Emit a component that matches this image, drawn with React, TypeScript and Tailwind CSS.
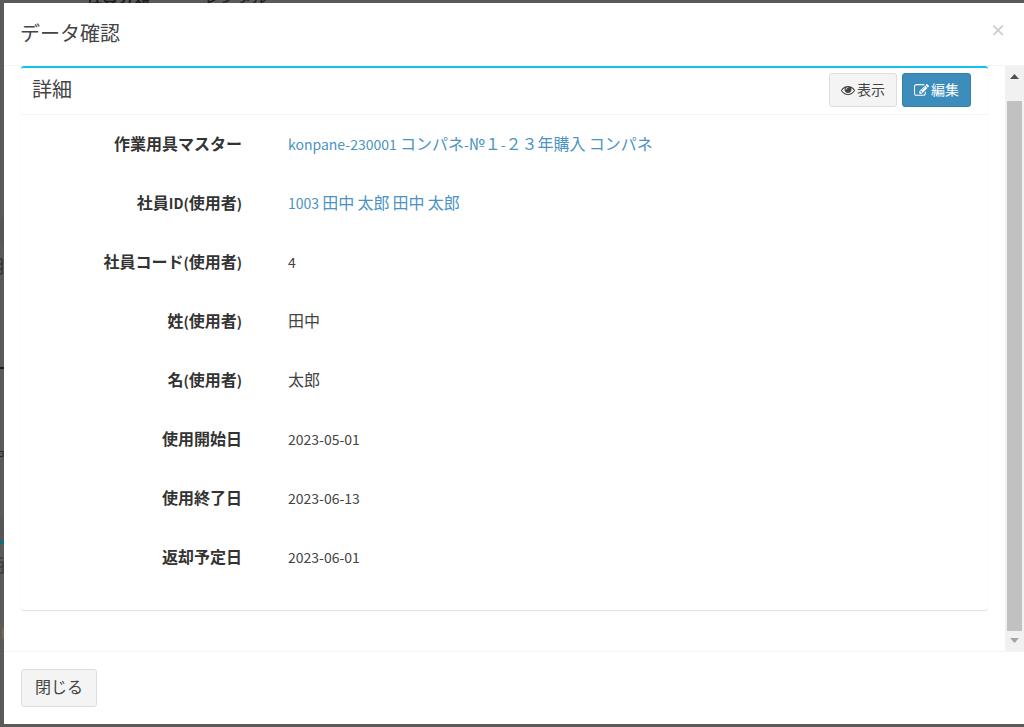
import type { ReactNode } from 'react';

function EyeIcon() {
  return (
    <svg viewBox="0 0 1792 1792" fill="currentColor" aria-hidden="true" className="size-[14px]">
      <path d="M1664 960q-152-236-381-353 61 104 61 225 0 185-131.5 316.5t-316.5 131.5-316.5-131.5-131.5-316.5q0-121 61-225-229 117-381 353 133 205 333.5 326.5t434.5 121.5 434.5-121.5 333.5-326.5zm-720-384q0-20-14-34t-34-14q-125 0-214.5 89.5t-89.5 214.5q0 20 14 34t34 14 34-14 14-34q0-86 61-147t147-61q20 0 34-14t14-34zm848 384q0 34-20 69-140 230-376.5 368.5t-499.5 138.5-499.5-139-376.5-368q-20-35-20-69t20-69q140-229 376.5-368t499.5-139 499.5 139 376.5 368q20 35 20 69z" />
    </svg>
  );
}

function EditIcon() {
  return (
    <svg viewBox="0 0 1792 1792" fill="currentColor" aria-hidden="true" className="size-[15px]">
      <path d="M888 1184l116-116-152-152-116 116v56h96v96h56zm440-720q-16-16-33 1l-350 350q-17 17-1 33t33-1l350-350q17-17 1-33zm80 594v190q0 119-84.5 203.5t-203.5 84.5h-832q-119 0-203.5-84.5t-84.5-203.5v-832q0-119 84.5-203.5t203.5-84.5h832q63 0 117 25 15 7 18 23 3 17-9 29l-49 49q-14 14-32 8-23-6-45-6h-832q-66 0-113 47t-47 113v832q0 66 47 113t113 47h832q66 0 113-47t47-113v-126q0-13 9-22l64-64q15-15 35-7t20 29zm-96-738l288 288-672 672h-288v-288zm444 132l-92 92-288-288 92-92q28-28 68-28t68 28l152 152q28 28 28 68t-28 68z" />
    </svg>
  );
}

// latin parts of a mixed line are set a step smaller than the kanji
function Latin({ children }: { children: ReactNode }) {
  return <span className="text-sm">{children}</span>;
}

const rows = [
  {
    label: '作業用具マスター',
    value: (
      <a href="#tool" className="text-[#4a93c4]">
        <Latin>konpane-230001 </Latin>コンパネ<Latin>-</Latin>№１<Latin>-</Latin>２３年購入<Latin> </Latin>コンパネ
      </a>
    ),
  },
  {
    label: <>社員<Latin>ID(</Latin>使用者<Latin>)</Latin></>,
    value: (
      <a href="#employee" className="text-[#4a93c4]">
        <Latin>1003 </Latin>田中<Latin> </Latin>太郎<Latin> </Latin>田中<Latin> </Latin>太郎
      </a>
    ),
  },
  { label: <>社員コード<Latin>(</Latin>使用者<Latin>)</Latin></>, value: <Latin>4</Latin> },
  { label: <>姓<Latin>(</Latin>使用者<Latin>)</Latin></>, value: '田中' },
  { label: <>名<Latin>(</Latin>使用者<Latin>)</Latin></>, value: '太郎' },
  { label: '使用開始日', value: <Latin>2023-05-01</Latin> },
  { label: '使用終了日', value: <Latin>2023-06-13</Latin> },
  { label: '返却予定日', value: <Latin>2023-06-01</Latin> },
];

function DetailBox() {
  return (
    <section className="rounded-[3px] border-t-2 border-t-[#14c1ee] bg-white shadow-[0_1px_1px_rgba(0,0,0,0.12)]">
      <div className="flex h-[47px] items-start justify-between border-b border-[#f4f4f4] pt-[5px] pl-[11px] pr-[17px]">
        <h3 className="text-xl leading-8">詳細</h3>
        <div className="flex gap-[5px]">
          <button type="button" className="flex h-[34px] items-center gap-[2px] rounded-[3px] border border-[#ddd] bg-[#f4f4f4] px-[11px] text-sm text-[#444]">
            <EyeIcon />
            <span className="pb-[3px]">表示</span>
          </button>
          <button type="button" className="flex h-[34px] items-center gap-[2px] rounded-[3px] border border-[#367fa9] bg-[#3c8dbc] px-[11px] text-sm text-white">
            <EditIcon />
            <span className="pb-[3px]">編集</span>
          </button>
        </div>
      </div>

      <dl className="pt-4 pr-3 pb-[7px] pl-[14px]">
        {rows.map((row, i) => (
          <div key={i} className="flex h-[59px] gap-[46px] text-base leading-6">
            <dt className="w-[22%] text-right font-bold text-[#333]">{row.label}</dt>
            <dd className="flex-1 whitespace-pre">{row.value}</dd>
          </div>
        ))}
      </dl>
    </section>
  );
}

function ScrollBar() {
  return (
    <div aria-hidden="true" className="flex w-[19px] flex-col items-center bg-[#f1f1f1]">
      <svg viewBox="0 0 19 35" className="h-[35px] w-full">
        <path d="M5 13h9l-4.5-5z" fill="#505050" />
      </svg>
      <div className="w-[15px] flex-1 bg-[#c1c1c1]" />
      <svg viewBox="0 0 19 20" className="h-5 w-full">
        <path d="M5 7h9l-4.5 5z" fill="#a3a3a3" />
      </svg>
    </div>
  );
}

// dimmed page that shows around the edge of the dialog
function Backdrop() {
  return (
    <div aria-hidden="true" className="absolute inset-0 overflow-hidden">
      <svg viewBox="0 0 4 727" className="absolute top-0 left-0 h-[727px] w-1">
        <path d="M0 219h4v24H0zM0 519h4v22H0z" fill="#545557" />
        <path d="M0 259h2v15H0M0 264h2M0 269h2" fill="none" stroke="#222" />
        <path d="M0 367h4v2H0z" fill="#1c1c1c" />
        <path d="M0 451.5h3v5H0" fill="none" stroke="#262626" />
        <path d="M0 541h4v3H0z" fill="#0b6f84" />
        <path d="M0 558h3M0 562h3v11H0M0 567h3" fill="none" stroke="#2b3036" />
        <path d="M2 628h2v11H2z" fill="#75694f" />
      </svg>
      <div className="absolute -top-3 left-[86px] flex gap-[54px] text-base leading-4 text-[#1c1c1c]">
        <span className="font-bold">社員分類</span>
        <span>レンタル</span>
      </div>
    </div>
  );
}

export default function App() {
  return (
    <div className="relative flex min-h-screen flex-col bg-[#5c5a59] pt-[3px] pb-[3px] pl-1 font-['Noto_Sans_CJK_JP',sans-serif] text-[#444]">
      <Backdrop />
      <div role="dialog" aria-labelledby="dialog-title" className="relative flex flex-1 flex-col bg-white">
        <header className="flex h-[63px] items-start justify-between border-b border-[#f4f4f4] pt-[14px] pl-4 pr-[18px]">
          <h2 id="dialog-title" className="text-xl leading-8">データ確認</h2>
          <button type="button" aria-label="閉じる" className="text-base leading-6 font-bold text-[#ccc]">×</button>
        </header>

        <div className="flex flex-1 border-b border-[#f4f4f4]">
          <div className="flex-1 pl-[17px] pr-[17px]">
            <DetailBox />
          </div>
          <ScrollBar />
        </div>

        <footer className="px-[17px] py-[17px]">
          <button type="button" className="h-[38px] rounded-[3px] border border-[#ddd] bg-[#f4f4f4] px-[13px] pb-1 text-base leading-6">閉じる</button>
        </footer>
      </div>
    </div>
  );
}
